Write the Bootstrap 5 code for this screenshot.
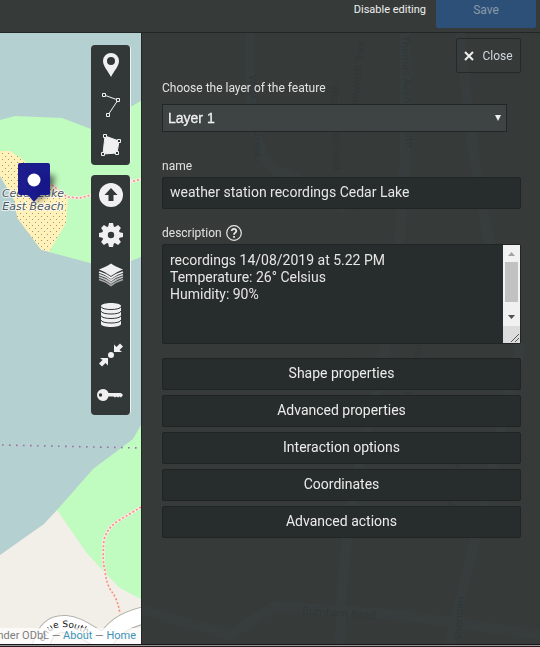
<!DOCTYPE html>
<html lang="en">
<head>
<meta charset="utf-8">
<meta name="viewport" content="width=device-width, initial-scale=1">
<title>Map editor</title>
<link href="https://cdn.jsdelivr.net/npm/bootstrap@5.3.0/dist/css/bootstrap.min.css" rel="stylesheet">
<style>
body{font-family:Roboto,"Noto Sans",sans-serif;background:#363b3a;color:#e2e2e0;font-size:12px;line-height:18px}
.topbar{height:33px;border-bottom:1px solid #222627;padding-right:4px}
.topbar .btn{font-size:12px;line-height:18px;border:0;border-radius:0 0 2px 2px;height:28px;padding:0 10px 9px}
.topbar .btn-plain{color:#efefef;font-size:11px}
.btn-save,.btn-save:disabled{width:100px;background:#2c5078;color:#8b99a8;opacity:1}
.map-pane{background:#b5d0d0;min-width:0}
.map-art{inset:0}
.tool-stack{padding:12px 10px 0 0;gap:10px}
.tools{width:40px;background:#323737;border-right:1px solid #eef3f0;border-radius:4px}
.tools .btn{height:40px;color:#f0f0f0;border:0}
.tools svg{width:24px;height:24px;overflow:visible}
.credits{left:0;right:0;bottom:0;height:16px;padding-right:5px;background:rgba(255,255,255,.7);color:#7d7d7d;font-size:11px;line-height:15px;white-space:nowrap}
.credits a{color:#3d94b8;text-decoration:none}
.edit-panel{width:399px;max-width:74%;border-left:1px solid #222627;padding:5px 19px 16px 20px}
.ghost{inset:0}
.btn-close-panel{height:35px;width:65px;padding:0;border:1px solid #25292a;border-radius:2px;color:#cfd6de;font-size:12px}
.field-label{font-size:12px;line-height:18px;margin:0}
.layer-label{margin:6px 0 7px}
.name-label{margin:25px 0 2px}
.desc-row{margin:15px 0 2px}
.layer-select{height:28px;padding:0 5px;border:1px solid #222627;background:#3e4443;color:#f0f0f0;font:14px "Liberation Sans",Arial,sans-serif;-webkit-text-stroke:.3px;appearance:none}
.select-wrap{width:345px;max-width:100%}
.select-arrow{right:5px;top:10px;width:8px;height:8px;pointer-events:none}
.dark-field{background:#272c2d;border:1px solid #202425;border-radius:2px;color:#e6e6e4;font-size:14px}
.name-input{height:32px;padding:0 7px 2px}
.desc-input{background:transparent;border:0;color:inherit;resize:none;height:98px;padding:7px 7px 6px;line-height:17px;outline:0}
.scroll-rail{width:17px;height:98px}
.sections{gap:5px;margin-top:14px}
.btn-section{height:32px;padding:0 0 2px;background:#272c2d;border:1px solid #202425;border-radius:2px;color:#ececea;font-size:14px;line-height:18px}
.bottom-edge{height:3px;background:#9a9193;border-top:1px solid #151718;border-bottom:1px solid #251c22}
</style>
<script src="https://cdn.jsdelivr.net/npm/bootstrap@5.3.0/dist/js/bootstrap.bundle.min.js"></script>
</head>
<body class="d-flex flex-column min-vh-100">
<header class="topbar d-flex justify-content-end align-items-start">
  <button type="button" class="btn btn-plain">Disable editing</button>
  <button type="button" class="btn btn-save" disabled>Save</button>
</header>
<main class="d-flex flex-grow-1">
  <section class="map-pane position-relative flex-grow-1 overflow-hidden" aria-label="Map">
    <svg class="map-art position-absolute w-100 h-100" viewBox="0 33 141 611" preserveAspectRatio="xMinYMin slice">
      <defs>
        <pattern id="sand" width="6" height="6" patternUnits="userSpaceOnUse"><rect width="6" height="6" fill="#fff1ba"/><rect x="2" y="3" width="1" height="1" fill="#a9946c"/><rect x="5" y="0" width="1" height="1" fill="#a9946c"/></pattern>
        <filter id="soft" x="-50%" y="-50%" width="200%" height="200%"><feGaussianBlur stdDeviation="3"/></filter>
        <path id="road-name" d="M44 642C46 633 53 627 64 627C76 627 87 634 100 643"/>
      </defs>
      <path fill="#c0fbbf" d="M0 120L15 116L62 118L91 129L141 101V257L131 261Q110 270 90 263L49 252L0 177z"/>
      <path fill="url(#sand)" d="M0 151H10L21 158L50 184L68 198L66 223L49 252L41 250L17 218L14 200L0 177z"/>
      <path fill="#b5d0d0" d="M0 176L14 200L17 218L41 250L49 252H0z"/>
      <path fill="#f2efe9" d="M0 555L44 524L57 510L141 560V645H0z"/>
      <path fill="#c0fbbf" d="M141 425L133 439L93 469L57 510L86 552L105 573L120 588L141 599z"/>
      <g fill="none" stroke-linejoin="round">
        <g stroke="#f4eee2" stroke-width="3"><path d="M52 185L67 197L80 198L91 195L131 182L141 179"/><path d="M141 507L118 521Q107 528 104 540Q102 562 105 570Q106 584 112 592Q118 600 120 614"/></g>
        <g stroke="#f98b82" stroke-width="1.6" stroke-dasharray="2 2"><path d="M52 185L67 197L80 198L91 195L131 182L141 179"/><path d="M141 507L118 521Q107 528 104 540Q102 562 105 570Q106 584 112 592Q118 600 120 614"/></g>
        <path d="M2 445L141 448" stroke="#9a6fa3" stroke-width="1.6" stroke-dasharray="1.6 5.4"/>
        <g stroke="#b5b2ae" stroke-width="18"><path d="M40 650C44 630 52 623 66 624C80 625 90 636 106 642"/><path d="M99 650C112 627 124 620 145 615"/></g>
        <g stroke="#fff" stroke-width="16"><path d="M40 650C44 630 52 623 66 624C80 625 90 636 106 642"/><path d="M99 650C112 627 124 620 145 615"/></g>
      </g>
      <text font-family="DejaVu Sans,sans-serif" font-size="9" fill="#111"><textPath href="#road-name">enue South</textPath></text>
      <g font-family="DejaVu Sans,sans-serif" font-style="italic" font-size="11" fill="#4c5663" stroke="#fff" stroke-opacity=".7" stroke-width="2" paint-order="stroke" text-anchor="middle"><text x="33" y="197">Cedar Lake</text><text x="33" y="210">East Beach</text></g>
      <path d="M26 172L55 176L52 190L36 202z" fill="#000" opacity=".6" filter="url(#soft)"/>
      <path d="M20 163H48Q50 163 50 165V193Q50 195 48 195H40L34 202L28 195H20Q18 195 18 193V165Q18 163 20 163z" fill="#14148c" fill-opacity=".96"/>
      <circle cx="34" cy="180" r="6.5" fill="#fff"/>
    </svg>
    <div class="tool-stack position-relative d-flex flex-column align-items-end">
      <div class="tools d-flex flex-column">
        <button type="button" class="btn p-0" aria-label="Draw a marker"><svg viewBox="0 0 24 24" fill="currentColor"><path fill-rule="evenodd" d="M12 0A8 8 0 0 1 20 8C20 13 15 18 12 24C9 18 4 13 4 8A8 8 0 0 1 12 0zM12 4A4 4 0 1 0 12 12A4 4 0 1 0 12 4z"/></svg></button>
        <button type="button" class="btn p-0" aria-label="Draw a line"><svg viewBox="0 0 24 24" fill="#323737" stroke="currentColor"><path d="M5 2L19 7L9 22" fill="none"/><path d="M3.5.5h3v3h-3zM17.500 5.500h3v3h-3zM7.500 20.500h3v3h-3z"/></svg></button>
        <button type="button" class="btn p-0" aria-label="Draw a polygon"><svg viewBox="0 0 24 24" fill="#323737" stroke="currentColor"><path d="M6 3L20 8L18 20L4 21z" fill="currentColor"/><path d="M4.500 1.500h3v3h-3zM18.500 6.500h3v3h-3zM16.500 18.500h3v3h-3zM2.500 19.500h3v3h-3z"/></svg></button>
      </div>
      <div class="tools d-flex flex-column">
        <button type="button" class="btn p-0" aria-label="Import data"><svg viewBox="0 0 24 24"><circle cx="12" cy="12" r="12" fill="currentColor"/><path fill="#323737" d="M12 5L18.500 12H14.500V18H9.500V12H5.500z"/></svg></button>
        <button type="button" class="btn p-0" aria-label="Map settings"><svg viewBox="0 0 24 24" fill="currentColor"><path fill-rule="evenodd" d="M12 3A9 9 0 1 0 12 21A9 9 0 1 0 12 3zM12 8.800A3.200 3.200 0 1 1 12 15.200A3.200 3.200 0 1 1 12 8.800z"/><g id="teeth"><path id="tooth" d="M9 4.500L10 0H14L15 4.500zM9 19.500L10 24H14L15 19.500z"/><use href="#tooth" transform="rotate(90 12 12)"/></g><use href="#teeth" transform="rotate(45 12 12)"/></svg></button>
        <button type="button" class="btn p-0" aria-label="Manage layers"><svg viewBox="0 0 24 24" fill="currentColor"><path d="M12 .5Q15 3 24 6.500Q17 9 12 13Q7 9 0 6.500Q9 3 12 .5z"/><g fill="none" stroke="currentColor" stroke-width="1.700"><path d="M0 9Q7 11 12 15Q17 11 24 9"/><path d="M0 11.500Q7 13.500 12 17.500Q17 13.500 24 11.500" opacity=".9"/><path d="M0 14Q7 16 12 20Q17 16 24 14" opacity=".75"/><path d="M0 16.500Q7 18.500 12 22.500Q17 18.500 24 16.500" opacity=".6"/></g></svg></button>
        <button type="button" class="btn p-0" aria-label="Browse data"><svg viewBox="0 0 24 24"><path fill="currentColor" d="M2 3C2 -1 22 -1 22 3V21C22 25 2 25 2 21z"/><path fill="none" stroke="#323737" d="M2 3.500C2 7.500 22 7.500 22 3.500M2 8C2 12 22 12 22 8M2 12.500C2 16.500 22 16.500 22 12.500M2 17C2 21 22 21 22 17"/></svg></button>
        <button type="button" class="btn p-0" aria-label="Use current view"><svg viewBox="0 0 24 24" fill="currentColor"><circle cx="12" cy="12" r="3"/><g id="inward"><path d="M15 9V1.500L17.500 4L21 .5L24 3.500L20.500 7L23 9z"/></g><use href="#inward" transform="rotate(180 12 12)"/></svg></button>
        <button type="button" class="btn p-0" aria-label="Permissions"><svg viewBox="0 0 24 24" fill="currentColor"><path fill-rule="evenodd" d="M4 6Q8 6 9.500 10H22L24 12L22 14.500L20.500 13.500L19 14.500L17.500 13.500L16 14.500L14.500 13.500H9.500Q8 18 4 18A6 6 0 0 1 4 6zM1.500 10.300A1.700 1.700 0 1 0 1.500 13.700A1.700 1.700 0 1 0 1.500 10.300z"/></svg></button>
      </div>
    </div>
    <div class="credits position-absolute d-flex justify-content-end"><span>under ODbL — <a href="#">About</a> — <a href="#">Home</a></span></div>
  </section>
  <aside class="edit-panel position-relative flex-shrink-0" aria-label="Feature properties">
    <svg class="ghost position-absolute w-100 h-100" viewBox="142 33 398 611" preserveAspectRatio="xMinYMin slice" aria-hidden="true">
      <g fill="none" stroke="#3b4343" stroke-width="10" opacity=".3"><path d="M250 33Q246 160 280 172T345 210"/><path d="M405 33V150Q400 300 370 420T340 644"/><path d="M142 610L230 635L275 606L400 615L540 635"/><path d="M460 33Q480 250 520 350L450 644"/></g>
      <g fill="none" stroke="#2c3142" stroke-dasharray="1 3" opacity=".5"><path d="M352 33Q365 200 352 330T325 644"/></g>
      <g font-family="DejaVu Sans,sans-serif" font-size="10" fill="#2b3235" opacity=".5">
        <text transform="translate(357 118) rotate(-84)">Kenilworth Trail</text><text transform="translate(402 36) rotate(88)">Thomas Avenue South</text><text transform="translate(249 75) rotate(86)">West 21st Street</text><text transform="translate(331 85) rotate(88)">Western Railroad</text><text transform="translate(360 345) rotate(-88)">Kenilworth Trail</text><text transform="translate(407 410) rotate(-76)">Thomas Avenue South</text><text transform="translate(448 528) rotate(-78)">Thomas Lane</text><text transform="translate(302 614) rotate(4)">Burnham Road</text><text transform="translate(461 641) rotate(-86)">Sheridan</text>
      </g>
    </svg>
    <form class="position-relative">
      <div class="d-flex justify-content-end"><button type="button" class="btn btn-close-panel d-flex align-items-center justify-content-center gap-2"><svg width="10" height="10" viewBox="0 0 10 10" fill="none" stroke="#eee" stroke-width="2"><path d="M1 1L9 9M9 1L1 9"/></svg>Close</button></div>
      <label class="field-label layer-label d-block" for="layer">Choose the layer of the feature</label>
      <div class="select-wrap position-relative">
        <select id="layer" class="layer-select d-block w-100"><option>Layer 1</option></select>
        <svg class="select-arrow position-absolute" viewBox="0 0 8 8" fill="#eee"><path d="M1 1H7L4 7z"/></svg>
      </div>
      <label class="field-label name-label d-block" for="name">name</label>
      <input id="name" class="dark-field name-input d-block w-100" type="text" value="weather station recordings Cedar Lake">
      <div class="desc-row d-flex align-items-center gap-1"><label class="field-label" for="desc">description</label>
        <svg width="16" height="16" viewBox="0 0 16 16" role="img" aria-label="Help" fill="none" stroke="#e8e8e8"><circle cx="8" cy="8" r="7.300" stroke-width="1.200"/><path d="M5.700 6C5.700 3.200 10.400 3.300 10.300 6C10.300 7.700 8 7.600 8 9.700M8 11V12.700" stroke-width="1.800"/></svg></div>
      <div class="dark-field d-flex">
        <textarea id="desc" class="desc-input flex-grow-1 overflow-hidden">recordings 14/08/2019 at 5.22 PM
Temperature: 26° Celsius
Humidity: 90%</textarea>
        <svg class="scroll-rail flex-shrink-0" viewBox="0 0 17 98" aria-hidden="true"><path fill="#f1f1f1" d="M0 0H17V98H0z"/><path fill="#c1c1c1" d="M2 17H15V57H2z"/><path fill="#a3a3a3" d="M5 11H12L8.500 7z"/><path fill="#505050" d="M5 70H12L8.500 74z"/><path fill="#dcdcdc" d="M0 81H17V98H0z"/><path stroke="#555" d="M8 97L16 89M12 97L16 93"/></svg>
      </div>
      <div class="d-grid sections">
        <button type="button" class="btn btn-section">Shape properties</button>
        <button type="button" class="btn btn-section">Advanced properties</button>
        <button type="button" class="btn btn-section">Interaction options</button>
        <button type="button" class="btn btn-section">Coordinates</button>
        <button type="button" class="btn btn-section">Advanced actions</button>
      </div>
    </form>
  </aside>
</main>
<div class="bottom-edge"></div>
</body>
</html>
